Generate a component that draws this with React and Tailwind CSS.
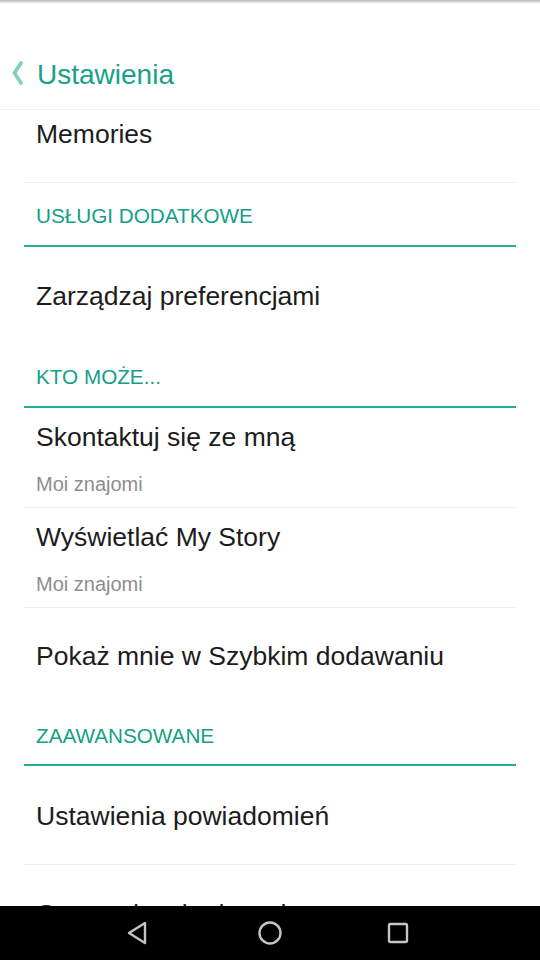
import React from "react";

const font = { fontFamily: '"Liberation Sans", Arial, sans-serif' };

function Sep() {
  return <div className="mx-[24px] h-px bg-[#f1f1f1]" />;
}

function SingleRow({ title, h = "h-[98px]" }) {
  return (
    <div className={`${h} flex items-center px-[36px] text-[26.5px] text-[#1c1c1c] leading-none`}>
      {title}
    </div>
  );
}

function DoubleRow({ title, sub }) {
  return (
    <div className="h-[99px] flex flex-col px-[36px]">
      <div className="h-[59px] flex items-center text-[26.5px] text-[#1c1c1c] leading-none">{title}</div>
      <div className="h-[32px] flex items-center pt-[1px] text-[20px] text-[#8d8d8d] leading-none">{sub}</div>
    </div>
  );
}

function SectionHeader({ title, h = "h-[63px]" }) {
  return (
    <div className={`${h} flex flex-col`}>
      <div className="flex-1 flex items-center pt-[4px] px-[36px] text-[20.7px] text-[#14a085] leading-none">{title}</div>
      <div className="mx-[24px] h-[2px] bg-[#22b092]" />
    </div>
  );
}

export default function App() {
  return (
    <div className="w-[540px] h-[960px] flex flex-col bg-white overflow-hidden" style={font}>
      <div className="h-[4px] bg-linear-to-b from-[#b8b8b8] to-white" />
      <div className="h-[106px] flex items-end border-b border-[#eeeeee]">
        <div className="h-[66px] w-full flex items-start pt-[12px] pl-[10px]">
          <svg width="16" height="24" viewBox="0 0 16 24" className="mt-[6px]">
            <path d="M11 2 L4.5 12 L11 22" fill="none" stroke="#7fd0bd" strokeWidth="3.6" strokeLinecap="round" strokeLinejoin="round" />
          </svg>
          <span className="ml-[11px] text-[28px] leading-none text-[#17a287] mt-[6px]">Ustawienia</span>
        </div>
      </div>
      <div className="flex-1 overflow-hidden">
        <div className="h-[72px] flex items-start pt-[11px] px-[36px] text-[26.5px] text-[#1c1c1c] leading-none">
          Memories
        </div>
        <Sep />
        <SectionHeader title="USŁUGI DODATKOWE" h="h-[64px]" />
        <SingleRow title="Zarządzaj preferencjami" />
        <SectionHeader title="KTO MOŻE..." />
        <DoubleRow title="Skontaktuj się ze mną" sub="Moi znajomi" />
        <Sep />
        <DoubleRow title="Wyświetlać My Story" sub="Moi znajomi" />
        <Sep />
        <SingleRow title="Pokaż mnie w Szybkim dodawaniu" h="h-[97px]" />
        <SectionHeader title="ZAAWANSOWANE" h="h-[61px]" />
        <div className="h-[98px] flex items-center pt-[2px] px-[36px] text-[26.5px] text-[#1c1c1c] leading-none">
          Ustawienia powiadomień
        </div>
        <Sep />
        <SingleRow title="Oszczędzanie danych" />
      </div>
      <div className="h-[54px] bg-black flex items-center">
        <div className="w-[283px] flex justify-between pl-[125px]">
          <svg width="24" height="26" viewBox="0 0 24 26">
            <path d="M20 3 L20 23 L4 13 Z" fill="none" stroke="#c4c4c4" strokeWidth="2.4" strokeLinejoin="round" />
          </svg>
          <svg width="26" height="26" viewBox="0 0 26 26">
            <circle cx="13" cy="13" r="10.5" fill="none" stroke="#c4c4c4" strokeWidth="2.4" />
          </svg>
        </div>
        <div className="ml-[103px]">
          <svg width="24" height="24" viewBox="0 0 24 24">
            <rect x="3" y="3" width="18" height="18" rx="1.5" fill="none" stroke="#c4c4c4" strokeWidth="2.4" />
          </svg>
        </div>
      </div>
    </div>
  );
}
